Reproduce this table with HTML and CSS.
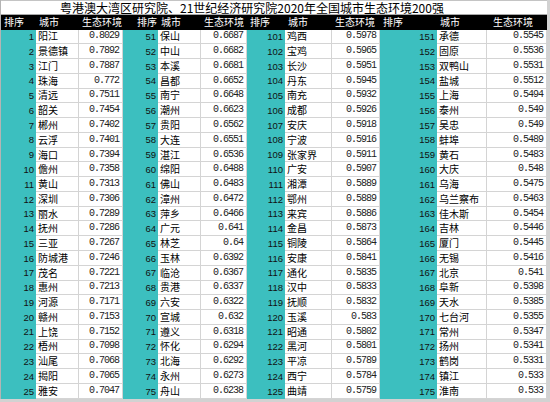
FILE: index.html
```html
<!DOCTYPE html>
<html lang="zh-CN">
<head>
<meta charset="utf-8">
<title>2020年全国城市生态环境200强</title>
<link rel="stylesheet" href="styles.css">
</head>
<body>
<div class="sheet">
<div class="title">粤港澳大湾区研究院、21世纪经济研究院2020年全国城市生态环境200强</div>
<div class="h">排序</div><div class="h">城市</div><div class="h">生态环境</div>
<div class="h h4">排序</div><div class="h">城市</div><div class="h">生态环境</div>
<div class="h">排序</div><div class="h">城市</div><div class="h">生态环境</div>
<div class="h">排序</div><div class="h">城市</div><div class="h h12">生态环境</div>

<div class="n">1</div><div class="c">阳江</div><div class="v">0.8029</div><div class="n">51</div><div class="c">保山</div><div class="v">0.6687</div><div class="n">101</div><div class="c">鸡西</div><div class="v">0.5978</div><div class="n">151</div><div class="c">承德</div><div class="v">0.5545</div>
<div class="n">2</div><div class="c">景德镇</div><div class="v">0.7892</div><div class="n">52</div><div class="c">中山</div><div class="v">0.6682</div><div class="n">102</div><div class="c">宝鸡</div><div class="v">0.5965</div><div class="n">152</div><div class="c">固原</div><div class="v">0.5536</div>
<div class="n">3</div><div class="c">江门</div><div class="v">0.7887</div><div class="n">53</div><div class="c">本溪</div><div class="v">0.6681</div><div class="n">103</div><div class="c">长沙</div><div class="v">0.5951</div><div class="n">153</div><div class="c">双鸭山</div><div class="v">0.5531</div>
<div class="n">4</div><div class="c">珠海</div><div class="v">0.772</div><div class="n">54</div><div class="c">昌都</div><div class="v">0.6652</div><div class="n">104</div><div class="c">丹东</div><div class="v">0.5945</div><div class="n">154</div><div class="c">盐城</div><div class="v">0.5512</div>
<div class="n">5</div><div class="c">清远</div><div class="v">0.7511</div><div class="n">55</div><div class="c">南宁</div><div class="v">0.6648</div><div class="n">105</div><div class="c">南充</div><div class="v">0.5932</div><div class="n">155</div><div class="c">上海</div><div class="v">0.5494</div>
<div class="n">6</div><div class="c">韶关</div><div class="v">0.7454</div><div class="n">56</div><div class="c">潮州</div><div class="v">0.6623</div><div class="n">106</div><div class="c">成都</div><div class="v">0.5926</div><div class="n">156</div><div class="c">泰州</div><div class="v">0.549</div>
<div class="n">7</div><div class="c">郴州</div><div class="v">0.7402</div><div class="n">57</div><div class="c">贵阳</div><div class="v">0.6562</div><div class="n">107</div><div class="c">安庆</div><div class="v">0.5918</div><div class="n">157</div><div class="c">吴忠</div><div class="v">0.549</div>
<div class="n">8</div><div class="c">云浮</div><div class="v">0.7401</div><div class="n">58</div><div class="c">大连</div><div class="v">0.6551</div><div class="n">108</div><div class="c">宁波</div><div class="v">0.5916</div><div class="n">158</div><div class="c">蚌埠</div><div class="v">0.5489</div>
<div class="n">9</div><div class="c">海口</div><div class="v">0.7394</div><div class="n">59</div><div class="c">湛江</div><div class="v">0.6536</div><div class="n">109</div><div class="c">张家界</div><div class="v">0.5911</div><div class="n">159</div><div class="c">黄石</div><div class="v">0.5483</div>
<div class="n">10</div><div class="c">儋州</div><div class="v">0.7358</div><div class="n">60</div><div class="c">绵阳</div><div class="v">0.6488</div><div class="n">110</div><div class="c">广安</div><div class="v">0.5907</div><div class="n">160</div><div class="c">大庆</div><div class="v">0.548</div>
<div class="n">11</div><div class="c">黄山</div><div class="v">0.7313</div><div class="n">61</div><div class="c">佛山</div><div class="v">0.6483</div><div class="n">111</div><div class="c">湘潭</div><div class="v">0.5889</div><div class="n">161</div><div class="c">乌海</div><div class="v">0.5475</div>
<div class="n">12</div><div class="c">深圳</div><div class="v">0.7306</div><div class="n">62</div><div class="c">漳州</div><div class="v">0.6472</div><div class="n">112</div><div class="c">鄂州</div><div class="v">0.5889</div><div class="n">162</div><div class="c">乌兰察布</div><div class="v">0.5463</div>
<div class="n">13</div><div class="c">丽水</div><div class="v">0.7289</div><div class="n">63</div><div class="c">萍乡</div><div class="v">0.6466</div><div class="n">113</div><div class="c">来宾</div><div class="v">0.5886</div><div class="n">163</div><div class="c">佳木斯</div><div class="v">0.5454</div>
<div class="n">14</div><div class="c">抚州</div><div class="v">0.7286</div><div class="n">64</div><div class="c">广元</div><div class="v">0.641</div><div class="n">114</div><div class="c">金昌</div><div class="v">0.5873</div><div class="n">164</div><div class="c">吉林</div><div class="v">0.5446</div>
<div class="n">15</div><div class="c">三亚</div><div class="v">0.7267</div><div class="n">65</div><div class="c">林芝</div><div class="v">0.64</div><div class="n">115</div><div class="c">铜陵</div><div class="v">0.5864</div><div class="n">165</div><div class="c">厦门</div><div class="v">0.5445</div>
<div class="n">16</div><div class="c">防城港</div><div class="v">0.7246</div><div class="n">66</div><div class="c">玉林</div><div class="v">0.6392</div><div class="n">116</div><div class="c">安康</div><div class="v">0.5841</div><div class="n">166</div><div class="c">无锡</div><div class="v">0.5416</div>
<div class="n">17</div><div class="c">茂名</div><div class="v">0.7221</div><div class="n">67</div><div class="c">临沧</div><div class="v">0.6367</div><div class="n">117</div><div class="c">通化</div><div class="v">0.5835</div><div class="n">167</div><div class="c">北京</div><div class="v">0.541</div>
<div class="n">18</div><div class="c">惠州</div><div class="v">0.7213</div><div class="n">68</div><div class="c">贵港</div><div class="v">0.6337</div><div class="n">118</div><div class="c">汉中</div><div class="v">0.5833</div><div class="n">168</div><div class="c">阜新</div><div class="v">0.5398</div>
<div class="n">19</div><div class="c">河源</div><div class="v">0.7171</div><div class="n">69</div><div class="c">六安</div><div class="v">0.6322</div><div class="n">119</div><div class="c">抚顺</div><div class="v">0.5832</div><div class="n">169</div><div class="c">天水</div><div class="v">0.5385</div>
<div class="n">20</div><div class="c">赣州</div><div class="v">0.7153</div><div class="n">70</div><div class="c">宣城</div><div class="v">0.632</div><div class="n">120</div><div class="c">玉溪</div><div class="v">0.583</div><div class="n">170</div><div class="c">七台河</div><div class="v">0.5355</div>
<div class="n">21</div><div class="c">上饶</div><div class="v">0.7152</div><div class="n">71</div><div class="c">遵义</div><div class="v">0.6318</div><div class="n">121</div><div class="c">昭通</div><div class="v">0.5802</div><div class="n">171</div><div class="c">常州</div><div class="v">0.5347</div>
<div class="n">22</div><div class="c">梧州</div><div class="v">0.7098</div><div class="n">72</div><div class="c">怀化</div><div class="v">0.6294</div><div class="n">122</div><div class="c">黑河</div><div class="v">0.5801</div><div class="n">172</div><div class="c">扬州</div><div class="v">0.5341</div>
<div class="n">23</div><div class="c">汕尾</div><div class="v">0.7068</div><div class="n">73</div><div class="c">北海</div><div class="v">0.6292</div><div class="n">123</div><div class="c">平凉</div><div class="v">0.5789</div><div class="n">173</div><div class="c">鹤岗</div><div class="v">0.5331</div>
<div class="n">24</div><div class="c">揭阳</div><div class="v">0.7065</div><div class="n">74</div><div class="c">永州</div><div class="v">0.6273</div><div class="n">124</div><div class="c">西宁</div><div class="v">0.5784</div><div class="n">174</div><div class="c">镇江</div><div class="v">0.533</div>
<div class="n">25</div><div class="c">雅安</div><div class="v">0.7047</div><div class="n">75</div><div class="c">舟山</div><div class="v">0.6238</div><div class="n">125</div><div class="c">曲靖</div><div class="v">0.5759</div><div class="n">175</div><div class="c">淮南</div><div class="v">0.533</div>
</div>
</body>
</html>
```
FILE: styles.css
```css
* {
  box-sizing: border-box;
  margin: 0;
  padding: 0;
}

html,
body {
  width: 550px;
  height: 402px;
  overflow: hidden;
}

body {
  background: #d2d2d2;
  font-family: "Noto Sans CJK SC", "Noto Sans", sans-serif;
  color: #000;
}

.sheet {
  display: grid;
  width: 547px;
  grid-template-columns: 35px 43px 44px 35px 43px 46px 38px 47px 48px 57px 50px 60px;
  grid-template-rows: 15px 14.5px repeat(25, 14.78px);
  border-left: 1px solid #b4b4b4;
  background: #fff;
}

.sheet > div {
  display: flex;
  align-items: center;
  line-height: 1;
  white-space: nowrap;
  overflow: hidden;
}

.title {
  grid-column: 1 / -1;
  padding-left: 59px;
  font-size: 12px;
  background: #fff;
  border-top: 1px solid #c4c4c4;
  border-bottom: 1px solid #a8a8a8;
}

.h {
  background: #000;
  color: #fff;
  font-size: 10px;
  padding-left: 3px;
}

.h4 {
  padding-left: 14px;
}

.h12 {
  padding-left: 6px;
}

.n {
  background: #3cbfbf;
  justify-content: flex-end;
  padding-right: 2px;
  font-family: "Liberation Sans", sans-serif;
  font-size: 9.5px;
  color: #111;
}

.c,
.v {
  background: #fff;
  border-right: 1px solid #d4d4d4;
  border-bottom: 1px solid #d4d4d4;
}

.c {
  padding-left: 2px;
  font-size: 10px;
}

.v {
  justify-content: flex-end;
  padding-right: 3px;
  font-family: "Liberation Mono", monospace;
  font-size: 10px;
  letter-spacing: -1px;
  color: #222;
}
```
